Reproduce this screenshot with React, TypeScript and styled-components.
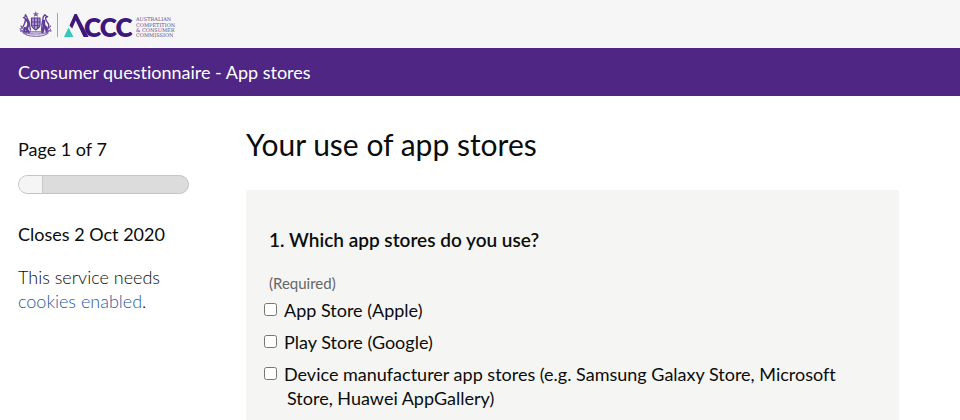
import React from "react";
import styled, { createGlobalStyle } from "styled-components";

const GlobalStyle = createGlobalStyle`
  * { box-sizing: border-box; }
  body {
    margin: 0;
    background: #fff;
    color: #0b0c0c;
    font: 400 18px/24px Lato, "Open Sans", sans-serif;
    font-variant-ligatures: none;
  }
`;

const Header = styled.header`
  display: flex;
  align-items: center;
  height: 48px;
  padding: 0 18px;
  background: #f6f6f6;
`;

const LogoLink = styled.a`
  display: flex;
`;

const TitleBar = styled.div`
  padding: 12px 18px;
  background: #4f2683;
  color: #fff;
`;

const Page = styled.div`
  display: grid;
  grid-template-columns: 171px minmax(0, 1fr);
  column-gap: 57px;
  padding: 28px 61px 0 18px;
`;

const Sidebar = styled.aside`
  padding-top: 13px;
`;

const SideText = styled.p<{ $light?: boolean }>`
  margin: 0;
  font-weight: ${(p) => (p.$light ? 300 : 400)};
`;

const Track = styled.div`
  height: 19px;
  margin: 14px 0 28px;
  overflow: hidden;
  border: 1px solid #c4c4c4;
  border-radius: 10px;
  background: #dcdcdc;
`;

const Fill = styled.div`
  height: 100%;
  border-right: 1px solid #c8c8c8;
  background: #f5f5f5;
`;

const Notice = styled.div`
  margin-top: 19px;
`;

const Link = styled.a`
  color: #1d5aa0;
  text-decoration: none;
`;

const Heading = styled.h1`
  margin: 0;
  font-size: 30px;
  line-height: 40px;
  font-weight: 400;
`;

const Question = styled.fieldset`
  min-width: 0;
  margin: 26px 0 0;
  padding: 38px 24px 20px 18px;
  border: 0;
  background: #f5f5f3;
`;

const Legend = styled.legend`
  float: left;
  width: 100%;
  margin-bottom: 19px;
  padding: 0 5px;
  font-size: 19px;
  font-weight: 600;
`;

const Required = styled.p`
  clear: both;
  margin: 0 0 3px;
  padding: 0 5px;
  color: #666;
  font-size: 15px;
  line-height: 24px;
`;

const Options = styled.div`
  display: grid;
  row-gap: 8px;
`;

const Option = styled.div`
  display: flex;
  align-items: flex-start;
`;

const Checkbox = styled.input`
  flex: none;
  width: 13px;
  height: 13px;
  margin: 5px 10px 0 0;
`;

const OptionLabel = styled.label`
  text-indent: -3px;
`;

const options = [
  { id: "apple", text: "App Store (Apple)" },
  { id: "google", text: "Play Store (Google)" },
  {
    id: "device",
    text: "Device manufacturer app stores (e.g. Samsung Galaxy Store, Microsoft Store, Huawei AppGallery)",
  },
];

function Logo() {
  return (
    <svg width="160" height="48" viewBox="18 0 160 48" aria-hidden="true">
      <g fill="none" stroke="#5f3c96" strokeLinecap="round" strokeLinejoin="round">
        <path
          d="M35.800 12l.8 1.500 1.700.1-1.300 1 .5 1.700-1.700-.9-1.600.9.500-1.700-1.300-1 1.700-.1z"
          fill="#7d62ac"
          strokeWidth=".4"
        />
        <path d="M31.500 18h8.500v7c0 2-2 3.500-4.300 5C33.500 28.500 31.500 27 31.500 25z" fill="#a996ca" strokeWidth="1.200" />
        <path d="M32 22h8M34.500 18v10M37.500 18v10M33 25.500h6" strokeWidth=".9" />
        <path d="M30.500 30c-1-3-.5-5-1.500-8-.7-2-2-3.500-2.300-5.300l-1.400-2-.2 2.300-1.700.5 2 1.200c.2 3-.4 4-1.400 6-.8 2-1.200 3-2.500 3.500" strokeWidth="1.300" />
        <path d="M26 19.500c2.500 2 3 5 1.500 7.500-1 1.500-.5 3.500 1.500 5M25 28l-1.500 4h3" strokeWidth="2.300" />
        <path d="M41.500 30c.5-2 .2-5 .7-7 .5-2 .7-3.500 1-6l1.700-2.300 1.200 1.300 1.500.7-2 1c0 2 .3 3 1.700 4.500 2 2 1.500 5-.2 7.300" strokeWidth="1.300" />
        <path d="M44 21c-1 3 0 5 2 6.500l1 4.500M44 26l-1.500 6" strokeWidth="2.800" />
        <path d="M20 28.500c2 4 7 5.500 15.500 5.500S49 32.500 51 28.500M23.500 33c3 2.500 7 3.200 12.500 3.200s9-.8 12-3.200" stroke="#7e65ab" strokeWidth="1.100" strokeDasharray="1.500 .8" />
        <path d="M30 31.800h12M21 26l2 2.500M50.500 26l-2 2.500M20.500 31l3-.5M51 31l-3-.5" stroke="#7e65ab" strokeWidth="1.300" strokeDasharray="2 .6" />
      </g>
      <path d="M57.500 13v24" stroke="#aaa0bd" />
      <path d="M64 37L68.500 27.500 73.500 37z" fill="#37c7bb" />
      <path d="M69.500 25.500L74.500 14h2.200L88.600 37h-5L75.700 20.500l-3.500 8z" fill="#3d177c" />
      <g fill="#3d177c" fontFamily="Lato, sans-serif" fontWeight="800" fontSize="26">
        <text x="84" y="36.500">C</text>
        <text x="99.700" y="36.500">C</text>
        <text x="115.400" y="36.500">C</text>
      </g>
      <g fill="#62508a" fontFamily="'DejaVu Serif', serif" fontSize="5">
        <text x="136" y="21.300">AUSTRALIAN</text>
        <text x="136" y="26.500">COMPETITION</text>
        <text x="136" y="31.700">&amp; CONSUMER</text>
        <text x="136" y="36.900">COMMISSION</text>
      </g>
    </svg>
  );
}

export default function App() {
  const page = 1;
  const pages = 7;
  return (
    <>
      <GlobalStyle />
      <Header>
        <LogoLink href="#" aria-label="Australian Competition and Consumer Commission">
          <Logo />
        </LogoLink>
      </Header>
      <TitleBar>Consumer questionnaire - App stores</TitleBar>
      <Page>
        <Sidebar>
          <SideText>
            Page {page} of {pages}
          </SideText>
          <Track role="progressbar" aria-label="Progress" aria-valuemin={0} aria-valuemax={pages} aria-valuenow={page}>
            <Fill style={{ width: `${(page / pages) * 100}%` }} />
          </Track>
          <SideText>Closes 2 Oct 2020</SideText>
          <Notice>
            <SideText $light>
              This service needs <Link href="#cookies">cookies enabled</Link>.
            </SideText>
          </Notice>
        </Sidebar>
        <main>
          <Heading>Your use of app stores</Heading>
          <Question>
            <Legend>1. Which app stores do you use?</Legend>
            <Required>(Required)</Required>
            <Options>
              {options.map((o) => (
                <Option key={o.id}>
                  <Checkbox type="checkbox" id={o.id} name="stores" value={o.id} />
                  <OptionLabel htmlFor={o.id}>{o.text}</OptionLabel>
                </Option>
              ))}
            </Options>
          </Question>
        </main>
      </Page>
    </>
  );
}
